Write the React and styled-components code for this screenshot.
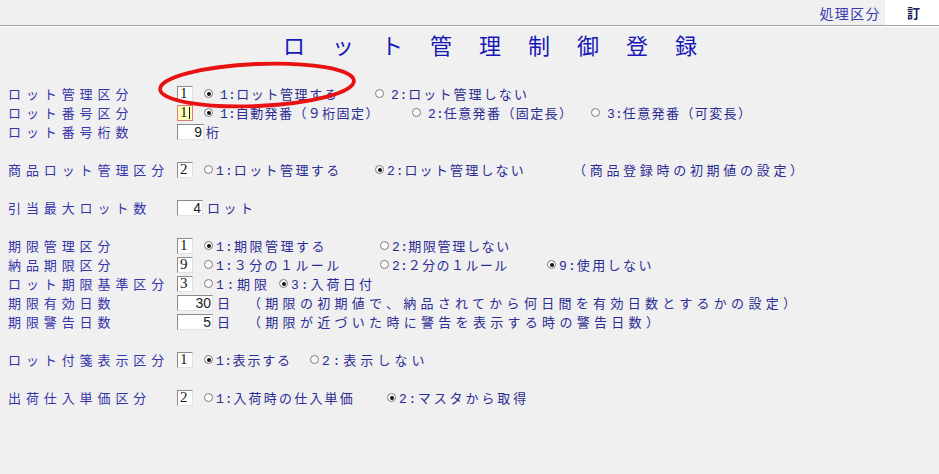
import React from "react";
import styled, { createGlobalStyle, css } from "styled-components";

const GlobalStyle = createGlobalStyle`
  html, body {
    margin: 0;
    padding: 0;
    background: #f0f0f0;
  }
  body {
    font-family: "Noto Sans CJK JP", "Noto Sans", sans-serif;
    font-size: 13px;
  }
`;

const Page = styled.div`
  position: relative;
  width: 939px;
  height: 474px;
  overflow: hidden;
  background: #f0f0f0;
`;

const TopBar = styled.header`
  display: flex;
  justify-content: flex-end;
  align-items: stretch;
  height: 25px;
  border-bottom: 1px solid #a0a0a0;
  box-shadow: 0 1px 0 #ffffff;
`;

const ModeLabel = styled.div`
  display: flex;
  align-items: center;
  padding-right: 4px;
  font-size: 14px;
  letter-spacing: 1.4px;
  color: #3a3ab4;
`;

const ModeValue = styled.div`
  display: flex;
  align-items: center;
  justify-content: center;
  width: 54px;
  padding-left: 3px;
  box-sizing: border-box;
  background: #ffffff;
  font-size: 13px;
  font-weight: 700;
  color: #1c1c52;
`;

const TitleBar = styled.div`
  height: 58px;
  text-align: center;
  padding-left: 68px;
`;

const Title = styled.h1`
  margin: 0;
  font-size: 22px;
  line-height: 36px;
  font-weight: 400;
  letter-spacing: 27px;
  color: #1717b8;
`;

const Form = styled.div`
  display: flex;
  flex-direction: column;
  padding-left: 8px;
`;

const Row = styled.div`
  display: flex;
  align-items: center;
  height: 19px;
  white-space: nowrap;
`;

const Label = styled.div`
  width: 169px;
  flex: none;
  font-size: 13px;
  letter-spacing: 4.9px;
  color: #3535aa;
`;

const Field = styled.div`
  box-sizing: border-box;
  flex: none;
  display: flex;
  align-items: center;
  width: ${(p) => p.$w}px;
  height: 16px;
  padding: 0 1px 0 2px;
  background: #ffffff;
  border-top: 1px solid #8a8a8a;
  border-left: 1px solid #8a8a8a;
  border-right: 1px solid #e2e2e2;
  border-bottom: 1px solid #e2e2e2;
  font-family: "Liberation Serif", serif;
  font-size: 15px;
  line-height: 1;
  color: #1a1a1a;
  ${(p) =>
    p.$num &&
    css`
      justify-content: flex-end;
      font-family: "Liberation Sans", sans-serif;
      font-size: 14px;
      color: #222;
    `}
  ${(p) =>
    p.$focus &&
    css`
      background: #ffffb8;
      border: 1px solid #e07a7a;
    `}
`;

const Caret = styled.span`
  display: inline-block;
  width: 1px;
  height: 12px;
  margin-left: 1px;
  background: #111;
`;

const Choices = styled.div`
  display: flex;
  align-items: center;
  margin-left: 11px;
`;

const Choice = styled.div`
  display: flex;
  align-items: center;
  flex: none;
  gap: ${(p) => p.$gap}px;
  width: ${(p) => (p.$w ? `${p.$w}px` : "auto")};
`;

const Radio = styled.span`
  position: relative;
  box-sizing: border-box;
  flex: none;
  width: 9px;
  height: 9px;
  border-radius: 50%;
  border: 1px solid #7c7c7c;
  background: #fbfbfb;
  ${(p) =>
    p.$on &&
    css`
      &::after {
        content: "";
        position: absolute;
        left: 1.5px;
        top: 1.5px;
        width: 4px;
        height: 4px;
        border-radius: 50%;
        background: #111;
      }
    `}
`;

const ChoiceText = styled.span`
  font-size: 13px;
  letter-spacing: ${(p) => p.$ls}px;
  color: #2c2c94;
`;

const Key = styled.span`
  font-family: "Liberation Mono", monospace;
  font-size: 13px;
  letter-spacing: ${(p) => p.$ls - 1.3}px;
`;

const Unit = styled.span`
  margin-left: ${(p) => p.$ml}px;
  font-size: 13px;
  letter-spacing: ${(p) => p.$ls}px;
  color: #2c2c94;
`;

const Note = styled.span`
  margin-left: ${(p) => p.$ml}px;
  font-size: 13px;
  letter-spacing: ${(p) => p.$ls}px;
  color: #2c2c94;
`;

const Blank = styled.div`
  height: 19px;
`;

const Marker = styled.svg`
  position: absolute;
  left: 150px;
  top: 55px;
  pointer-events: none;
`;

const rows = [
  {
    label: "ロット管理区分",
    box: { v: "1" },
    gap: 7,
    items: [
      { k: "1:", t: "ロット管理する", on: true, w: 171, ls: 1.6 },
      { k: "2:", t: "ロット管理しない", ls: 2.1 },
    ],
  },
  {
    label: "ロット番号区分",
    box: { v: "1", focus: true },
    gap: 7,
    items: [
      { k: "1:", t: "自動発番（９桁固定）", on: true, w: 208, ls: 1.4 },
      { k: "2:", t: "任意発番（固定長）", w: 179, ls: 1.4 },
      { k: "3:", t: "任意発番（可変長）", ls: 1.4 },
    ],
  },
  {
    label: "ロット番号桁数",
    box: { v: "9", w: 27, num: true },
    unit: { t: "桁", ml: 2, ls: 0 },
  },
  null,
  {
    label: "商品ロット管理区分",
    box: { v: "2" },
    gap: 3,
    items: [
      { k: "1:", t: "ロット管理する", w: 171, ls: 2.4 },
      { k: "2:", t: "ロット管理しない", on: true, w: 198, ls: 2.2 },
    ],
    note: { t: "（商品登録時の初期値の設定）", ml: 0, ls: 3.7 },
  },
  null,
  {
    label: "引当最大ロット数",
    box: { v: "4", w: 26, num: true },
    unit: { t: "ロット", ml: 4, ls: 3.5 },
  },
  null,
  {
    label: "期限管理区分",
    box: { v: "1" },
    gap: 3,
    items: [
      { k: "1:", t: "期限管理する", on: true, w: 176, ls: 2.5 },
      { k: "2:", t: "期限管理しない", ls: 1.65 },
    ],
  },
  {
    label: "納品期限区分",
    box: { v: "9" },
    gap: 3,
    items: [
      { k: "1:", t: "３分の１ルール", w: 176, ls: 2.4 },
      { k: "2:", t: "２分の１ルール", w: 167, ls: 1.4 },
      { k: "9:", t: "使用しない", on: true, ls: 2.4 },
    ],
  },
  {
    label: "ロット期限基準区分",
    box: { v: "3" },
    gap: 3,
    items: [
      { k: "1:", t: "期限", w: 75, ls: 4 },
      { k: "3:", t: "入荷日付", on: true, ls: 3.2 },
    ],
  },
  {
    label: "期限有効日数",
    box: { v: "30", w: 36, num: true },
    unit: { t: "日", ml: 4, ls: 0 },
    note: {
      t: "（期限の初期値で、納品されてから何日間を有効日数とするかの設定）",
      ml: 18,
      ls: 4.3,
    },
  },
  {
    label: "期限警告日数",
    box: { v: "5", w: 36, num: true },
    unit: { t: "日", ml: 4, ls: 0 },
    note: {
      t: "（期限が近づいた時に警告を表示する時の警告日数）",
      ml: 18,
      ls: 4.3,
    },
  },
  null,
  {
    label: "ロット付箋表示区分",
    box: { v: "1" },
    gap: 3,
    items: [
      { k: "1:", t: "表示する", on: true, w: 106, ls: 1.8 },
      { k: "2:", t: "表示しない", ls: 4.1 },
    ],
  },
  null,
  {
    label: "出荷仕入単価区分",
    box: { v: "2" },
    gap: 3,
    items: [
      { k: "1:", t: "入荷時の仕入単価", w: 183, ls: 2.2 },
      { k: "2:", t: "マスタから取得", on: true, ls: 2.9 },
    ],
  },
];

function FormRow({ row }) {
  const { label, box, gap, items, unit, note } = row;
  return (
    <Row>
      <Label>{label}</Label>
      <Field $w={box.w || 16} $num={box.num} $focus={box.focus}>
        {box.v}
        {box.focus && <Caret />}
      </Field>
      {unit && (
        <Unit $ml={unit.ml} $ls={unit.ls}>
          {unit.t}
        </Unit>
      )}
      {items && (
        <Choices>
          {items.map((it) => (
            <Choice key={it.k} $w={it.w} $gap={gap}>
              <Radio $on={it.on} />
              <ChoiceText $ls={it.ls}>
                <Key $ls={it.ls}>{it.k}</Key>
                {it.t}
              </ChoiceText>
            </Choice>
          ))}
        </Choices>
      )}
      {note && (
        <Note $ml={note.ml} $ls={note.ls}>
          {note.t}
        </Note>
      )}
    </Row>
  );
}

export default function App() {
  return (
    <Page>
      <GlobalStyle />
      <TopBar>
        <ModeLabel>処理区分</ModeLabel>
        <ModeValue>訂</ModeValue>
      </TopBar>
      <TitleBar>
        <Title>ロット管理制御登録</Title>
      </TitleBar>
      <Form>
        {rows.map((row, i) =>
          row ? <FormRow key={i} row={row} /> : <Blank key={i} />
        )}
      </Form>
      <Marker width="220" height="62" viewBox="0 0 220 62">
        <ellipse
          cx="107"
          cy="30"
          rx="97"
          ry="21"
          transform="rotate(-2.5 107 30)"
          fill="none"
          stroke="#e81212"
          strokeWidth="3.8"
        />
      </Marker>
    </Page>
  );
}
